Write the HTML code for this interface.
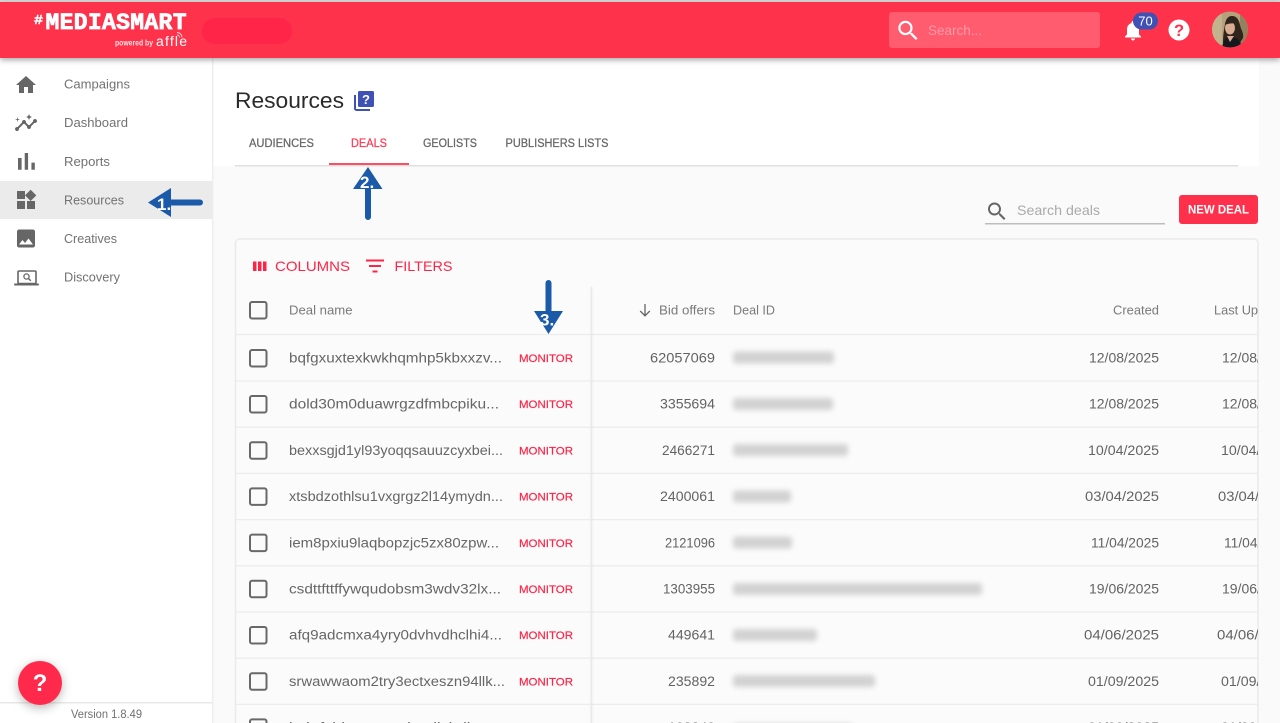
<!DOCTYPE html>
<html><head><meta charset="utf-8"><title>Resources</title>
<style>
html,body{margin:0;padding:0;width:1280px;height:723px;overflow:hidden;background:#fafafa}
svg{display:block}
text{font-family:"Liberation Sans",sans-serif}
.n{font-size:13px;fill:#727272}
.t{font-size:11.5px;fill:#666;stroke:#666;stroke-width:.25}
.h{font-size:12.5px;fill:#7a7a7a}
.r{font-size:13.5px;fill:#666}
.m{font-size:11px;fill:#ff2447;stroke:#ff2447;stroke-width:.2}
.v{font-size:13.5px;fill:#636363;text-anchor:end}
.a{font-size:17px;fill:#fff;font-weight:bold}
.cb{fill:none;stroke:#696969;stroke-width:2}
.l{stroke:#ececec;stroke-width:1.3}
.b{fill:#d2d2d2;filter:url(#bl)}
</style></head><body>
<svg width="1280" height="723" viewBox="0 0 1280 723" xmlns="http://www.w3.org/2000/svg">
<defs>
<filter id="bl" x="-10%" y="-100%" width="120%" height="300%"><feGaussianBlur stdDeviation="2.6"/></filter>
<filter id="sh" x="-10%" y="-50%" width="120%" height="250%"><feDropShadow dx="0" dy="2" stdDeviation="3" flood-color="#000" flood-opacity=".35"/></filter>
<filter id="fs" x="-50%" y="-50%" width="200%" height="200%"><feDropShadow dx="0" dy="3" stdDeviation="5" flood-color="#000" flood-opacity=".28"/></filter>
<filter id="cs" x="-50%" y="-5%" width="200%" height="110%"><feGaussianBlur stdDeviation="1.5"/></filter>
<clipPath id="card"><rect x="235" y="239" width="1023" height="490"/></clipPath>
<clipPath id="av"><circle cx="1230" cy="29.500" r="18"/></clipPath>
</defs>

<rect width="1280" height="723" fill="#fafafa"/>
<rect x="0" y="58" width="1259" height="108" fill="#fff"/>
<rect x="0" y="58" width="212" height="665" fill="#fff"/>
<rect x="212" y="58" width="1.500" height="665" fill="#eeeeee"/>

<!-- Sidebar -->
<rect x="0" y="181" width="212" height="38" fill="#ebebeb"/>
<g fill="#666">
<path transform="translate(14 73)" d="M10 20v-6h4v6h5v-8h3L12 3 2 12h3v8z"/>
<path transform="translate(14 111)" d="M21 8c-1.450 0-2.260 1.440-1.930 2.510l-3.550 3.560c-.3-.09-.74-.09-1.040 0l-2.550-2.550C12.270 10.450 11.460 9 10 9c-1.450 0-2.270 1.440-1.930 2.520l-4.560 4.550C2.440 15.740 1 16.550 1 18c0 1.100.9 2 2 2 1.450 0 2.260-1.440 1.930-2.510l4.550-4.560c.3.09.74.09 1.040 0l2.550 2.550C12.730 16.550 13.540 18 15 18c1.450 0 2.270-1.440 1.930-2.520l3.560-3.550c1.070.33 2.510-.48 2.510-1.930 0-1.100-.9-2-2-2zM15 9l.94-2.070L18 6l-2.060-.93L15 3l-.92 2.070L12 6l2.080.93zM3.500 11L4 9l2-.5L4 8l-.5-2L3 8l-2 .5L3 9z"/>
<path transform="translate(12 147) scale(1.200)" d="M5 9.200h3V19H5zM10.600 5h2.800v14h-2.800zm5.600 8H19v6h-2.800z"/>
<path transform="translate(14 188)" d="M13 13v8h8v-8h-8zM3 21h8v-8H3v8zM3 3v8h8V3H3zm13.660-1.310L11 7.340 16.660 13l5.660-5.660-5.660-5.650z"/>
<path transform="translate(14 226.500)" d="M21 19V5c0-1.100-.9-2-2-2H5c-1.100 0-2 .9-2 2v14c0 1.100.9 2 2 2h14c1.100 0 2-.9 2-2zM8.500 13.500l2.500 3.010L14.500 12l4.500 6H5l3.500-4.500z"/>
<rect x="14" y="283.500" width="25" height="2" rx="1"/>
</g>
<rect x="18" y="271" width="18" height="12.500" rx="1" fill="none" stroke="#666" stroke-width="1.600"/>
<circle cx="26.500" cy="276.500" r="2.600" fill="none" stroke="#666" stroke-width="1.300"/>
<path d="M28.500 278.500l2.300 2.300" stroke="#666" stroke-width="1.400"/>

<text class="n" x="64" y="88.500" textLength="66" lengthAdjust="spacingAndGlyphs">Campaigns</text>
<text class="n" x="64" y="127" textLength="64" lengthAdjust="spacingAndGlyphs">Dashboard</text>
<text class="n" x="64" y="166" textLength="46" lengthAdjust="spacingAndGlyphs">Reports</text>
<text class="n" x="64" y="204.500" textLength="60" lengthAdjust="spacingAndGlyphs">Resources</text>
<text class="n" x="64" y="243" textLength="53" lengthAdjust="spacingAndGlyphs">Creatives</text>
<text class="n" x="64" y="281.500" textLength="56" lengthAdjust="spacingAndGlyphs">Discovery</text>

<rect x="0" y="702" width="212" height="1.500" fill="#e8e8e8"/>
<text x="71" y="718" font-size="11.500" fill="#707070" textLength="71" lengthAdjust="spacingAndGlyphs">Version 1.8.49</text>
<circle cx="40" cy="683" r="22" fill="#ff2c4b" filter="url(#fs)"/>
<text x="40" y="691" font-size="24" font-weight="bold" fill="#fff" text-anchor="middle">?</text>

<!-- Header -->
<rect x="0" y="0" width="1280" height="2" fill="#d8d8d8"/>
<rect x="0" y="2" width="1280" height="56" fill="#ff304b" filter="url(#sh)"/>
<text x="34" y="24" font-size="14" font-weight="bold" fill="#fff" stroke="#fff" stroke-width=".4" textLength="9" lengthAdjust="spacingAndGlyphs" style="font-family:'Liberation Mono',monospace">#</text>
<text x="45.500" y="29" font-size="23" font-weight="bold" fill="#fff" stroke="#fff" stroke-width=".8" textLength="141" lengthAdjust="spacing" style="font-family:'Liberation Mono',monospace">MEDIASMART</text>
<text x="115" y="45.500" font-size="8.500" font-weight="bold" fill="#ffdfe3" textLength="38" lengthAdjust="spacingAndGlyphs">powered by</text>
<text x="156" y="46" font-size="14" fill="#fff" textLength="31" lengthAdjust="spacing">affle</text>
<path d="M177 32.500a5 5 0 0 1 5 5M177 35a2.500 2.500 0 0 1 2.500 2.500" fill="none" stroke="#ffd5da" stroke-width=".9"/>
<rect x="202" y="18" width="90" height="26" rx="13" fill="#ff2548"/>

<rect x="889" y="12" width="211" height="36" rx="3" fill="#ff5c6f"/>
<path fill="#fff" transform="translate(895 17.500) scale(1.100)" d="M15.500 14h-.79l-.28-.27C15.410 12.590 16 11.110 16 9.500 16 5.910 13.090 3 9.500 3S3 5.910 3 9.500 5.910 16 9.500 16c1.610 0 3.090-.59 4.230-1.570l.27.28v.79l5 4.990L20.490 19l-4.990-5zm-6 0C7.010 14 5 11.990 5 9.500S7.010 5 9.500 5 14 7.010 14 9.500 11.990 14 9.500 14z"/>
<text x="928" y="35" font-size="14" fill="#ff9aa7" textLength="54" lengthAdjust="spacingAndGlyphs">Search...</text>

<path fill="#fff" transform="translate(1121 18.500)" d="M12 22c1.100 0 2-.9 2-2h-4c0 1.100.89 2 2 2zm6-6v-5c0-3.070-1.640-5.640-4.500-6.320V4c0-.83-.67-1.500-1.500-1.500s-1.500.67-1.500 1.500v.68C7.630 5.360 6 7.920 6 11v5l-2 2v1h16v-1l-2-2z"/>
<rect x="1133" y="12.500" width="25" height="17" rx="8.500" fill="#3f51b5"/>
<text x="1145.500" y="25.500" font-size="13" fill="#fff" text-anchor="middle">70</text>
<circle cx="1179" cy="30" r="10.500" fill="#fff"/>
<text x="1179" y="36" font-size="16.500" font-weight="bold" fill="#ff304b" text-anchor="middle">?</text>

<g clip-path="url(#av)">
<rect x="1212" y="11" width="36" height="37" fill="#b5a27c"/>
<rect x="1212" y="11" width="10" height="37" fill="#c2b28d"/>
<rect x="1240" y="11" width="8" height="37" fill="#94815e"/>
<path d="M1223 43c0-8 1-13 2-19 1-5 3-8 7-8 5 0 7 4 8 9 1 5 4 8 3 13l-5 8z" fill="#30241c"/>
<ellipse cx="1230" cy="28" rx="5" ry="6.500" fill="#d8ad92"/>
<path d="M1225 25c0-4 3-6 6-6 3 0 4 2 5 5-3-1-7-1-11 1z" fill="#30241c"/>
<path d="M1222 48c1-7 4-11 8-11 6 0 11 3 12 11z" fill="#15181d"/>
<path d="M1227 36l3 6 4-6z" fill="#d8ad92"/>
</g>

<!-- Title -->
<text x="235" y="108" font-size="22" fill="#2a2a2a" textLength="109" lengthAdjust="spacingAndGlyphs">Resources</text>
<path d="M355 95v13.500a1.500 1.500 0 0 0 1.500 1.500H370" fill="none" stroke="#3f51b5" stroke-width="2"/>
<rect x="358" y="91" width="16" height="16" rx="1.500" fill="#3f51b5"/>
<text x="366" y="104" font-size="13" font-weight="bold" fill="#fff" text-anchor="middle">?</text>

<!-- Tabs -->
<rect x="235" y="165" width="1003" height="1.500" fill="#e0e0e0"/>
<text class="t" x="249" y="147" textLength="65" lengthAdjust="spacingAndGlyphs">AUDIENCES</text>
<text class="t" x="351" y="147" textLength="36" lengthAdjust="spacingAndGlyphs" style="fill:#ff3a55;stroke:#ff3a55">DEALS</text>
<text class="t" x="423" y="147" textLength="54" lengthAdjust="spacingAndGlyphs">GEOLISTS</text>
<text class="t" x="505.500" y="147" textLength="103" lengthAdjust="spacingAndGlyphs">PUBLISHERS LISTS</text>
<rect x="329" y="163" width="80" height="2" fill="#ff4d63"/>

<!-- Search deals + button -->
<path fill="#666" transform="translate(985 199.500)" d="M15.500 14h-.79l-.28-.27C15.410 12.590 16 11.110 16 9.500 16 5.910 13.090 3 9.500 3S3 5.910 3 9.500 5.910 16 9.500 16c1.610 0 3.090-.59 4.230-1.570l.27.28v.79l5 4.990L20.490 19l-4.990-5zm-6 0C7.010 14 5 11.990 5 9.500S7.010 5 9.500 5 14 7.010 14 9.500 11.990 14 9.500 14z"/>
<text x="1017" y="215" font-size="14" fill="#aaa" textLength="83" lengthAdjust="spacingAndGlyphs">Search deals</text>
<rect x="985" y="223" width="180" height="1.500" fill="#bdbdbd"/>
<rect x="1179" y="195" width="79" height="29" rx="3" fill="#ff304b"/>
<text x="1188" y="213.500" font-size="11.500" font-weight="bold" fill="#fff" textLength="61" lengthAdjust="spacingAndGlyphs">NEW DEAL</text>

<!-- Card -->
<rect x="235.500" y="239" width="1022.500" height="500" rx="4" fill="#fbfbfb" stroke="#eaeaea" stroke-width="1.500"/>

<g fill="#ff2447">
<rect x="253" y="261.500" width="3.500" height="9.500"/><rect x="258" y="261.500" width="3.500" height="9.500"/><rect x="263" y="261.500" width="3.500" height="9.500"/>
<rect x="366" y="259.500" width="18" height="2"/><rect x="369" y="265" width="12" height="2"/><rect x="372.500" y="270.500" width="5" height="2"/>
</g>
<text x="275" y="271" font-size="14" fill="#ff2447" textLength="75" lengthAdjust="spacingAndGlyphs">COLUMNS</text>
<text x="394.500" y="271" font-size="14" fill="#ff2447" textLength="58" lengthAdjust="spacingAndGlyphs">FILTERS</text>

<g clip-path="url(#card)">
<g class="l">
<line x1="236" x2="1258" y1="334.500" y2="334.500"/>
<line x1="236" x2="1258" y1="381" y2="381"/>
<line x1="236" x2="1258" y1="427.200" y2="427.200"/>
<line x1="236" x2="1258" y1="473.400" y2="473.400"/>
<line x1="236" x2="1258" y1="519.600" y2="519.600"/>
<line x1="236" x2="1258" y1="565.800" y2="565.800"/>
<line x1="236" x2="1258" y1="612" y2="612"/>
<line x1="236" x2="1258" y1="658.200" y2="658.200"/>
<line x1="236" x2="1258" y1="704.400" y2="704.400"/>
</g>
<rect x="590.500" y="287" width="2" height="440" fill="#000" opacity=".07" filter="url(#cs)"/>
<rect x="591" y="287" width="1" height="440" fill="#e9e9e9"/>

<rect class="cb" x="250" y="302" width="16.500" height="16.500" rx="2"/>
<rect class="cb" x="250" y="350" width="16.500" height="16.500" rx="2"/>
<rect class="cb" x="250" y="396" width="16.500" height="16.500" rx="2"/>
<rect class="cb" x="250" y="442.200" width="16.500" height="16.500" rx="2"/>
<rect class="cb" x="250" y="488.400" width="16.500" height="16.500" rx="2"/>
<rect class="cb" x="250" y="534.600" width="16.500" height="16.500" rx="2"/>
<rect class="cb" x="250" y="580.800" width="16.500" height="16.500" rx="2"/>
<rect class="cb" x="250" y="627" width="16.500" height="16.500" rx="2"/>
<rect class="cb" x="250" y="673.200" width="16.500" height="16.500" rx="2"/>
<rect class="cb" x="250" y="719.400" width="16.500" height="16.500" rx="2"/>

<text class="h" x="289" y="314.500" textLength="63.500" lengthAdjust="spacingAndGlyphs">Deal name</text>
<path d="M645 304v11.500M640.200 311l4.800 4.800 4.800-4.800" fill="none" stroke="#666" stroke-width="1.300"/>
<text class="h" x="659" y="314.500" textLength="56" lengthAdjust="spacingAndGlyphs">Bid offers</text>
<text class="h" x="733" y="314.500" textLength="42" lengthAdjust="spacingAndGlyphs">Deal ID</text>
<text class="h" x="1113" y="314.500" textLength="46" lengthAdjust="spacingAndGlyphs">Created</text>
<text class="h" x="1214" y="314.500" textLength="76" lengthAdjust="spacingAndGlyphs">Last Updated</text>

<text class="r" x="289" y="362.500" textLength="213" lengthAdjust="spacingAndGlyphs">bqfgxuxtexkwkhqmhp5kbxxzv...</text>
<text class="r" x="289" y="408.700" textLength="210" lengthAdjust="spacingAndGlyphs">dold30m0duawrgzdfmbcpiku...</text>
<text class="r" x="289" y="454.900" textLength="214" lengthAdjust="spacingAndGlyphs">bexxsgjd1yl93yoqqsauuzcyxbei...</text>
<text class="r" x="289" y="501.100" textLength="214" lengthAdjust="spacingAndGlyphs">xtsbdzothlsu1vxgrgz2l14ymydn...</text>
<text class="r" x="289" y="547.300" textLength="210" lengthAdjust="spacingAndGlyphs">iem8pxiu9laqbopzjc5zx80zpw...</text>
<text class="r" x="289" y="593.500" textLength="212" lengthAdjust="spacingAndGlyphs">csdttfttffywqudobsm3wdv32lx...</text>
<text class="r" x="289" y="639.700" textLength="213" lengthAdjust="spacingAndGlyphs">afq9adcmxa4yry0dvhvdhclhi4...</text>
<text class="r" x="289" y="685.900" textLength="216" lengthAdjust="spacingAndGlyphs">srwawwaom2try3ectxeszn94llk...</text>
<text class="r" x="289" y="732.100" textLength="212" lengthAdjust="spacingAndGlyphs">bvkrfzhkmzapmthxqllxhdkyr...</text>

<text class="m" x="519" y="362" textLength="54" lengthAdjust="spacingAndGlyphs">MONITOR</text>
<text class="m" x="519" y="408.200" textLength="54" lengthAdjust="spacingAndGlyphs">MONITOR</text>
<text class="m" x="519" y="454.400" textLength="54" lengthAdjust="spacingAndGlyphs">MONITOR</text>
<text class="m" x="519" y="500.600" textLength="54" lengthAdjust="spacingAndGlyphs">MONITOR</text>
<text class="m" x="519" y="546.800" textLength="54" lengthAdjust="spacingAndGlyphs">MONITOR</text>
<text class="m" x="519" y="593" textLength="54" lengthAdjust="spacingAndGlyphs">MONITOR</text>
<text class="m" x="519" y="639.200" textLength="54" lengthAdjust="spacingAndGlyphs">MONITOR</text>
<text class="m" x="519" y="685.400" textLength="54" lengthAdjust="spacingAndGlyphs">MONITOR</text>

<text class="v" x="715" y="362.500" textLength="65" lengthAdjust="spacingAndGlyphs">62057069</text>
<text class="v" x="715" y="408.700" textLength="55" lengthAdjust="spacingAndGlyphs">3355694</text>
<text class="v" x="715" y="454.900" textLength="53" lengthAdjust="spacingAndGlyphs">2466271</text>
<text class="v" x="715" y="501.100" textLength="55" lengthAdjust="spacingAndGlyphs">2400061</text>
<text class="v" x="715" y="547.300" textLength="50" lengthAdjust="spacingAndGlyphs">2121096</text>
<text class="v" x="715" y="593.500" textLength="52" lengthAdjust="spacingAndGlyphs">1303955</text>
<text class="v" x="715" y="639.700" textLength="47" lengthAdjust="spacingAndGlyphs">449641</text>
<text class="v" x="715" y="685.900" textLength="47" lengthAdjust="spacingAndGlyphs">235892</text>
<text class="v" x="715" y="732.100" textLength="47" lengthAdjust="spacingAndGlyphs">198240</text>

<rect class="b" x="733" y="351.500" width="101" height="12" rx="3"/>
<rect class="b" x="733" y="398" width="100" height="12" rx="3"/>
<rect class="b" x="733" y="444" width="115" height="12" rx="3"/>
<rect class="b" x="733" y="490.500" width="58" height="12" rx="3"/>
<rect class="b" x="733" y="536.500" width="59" height="12" rx="3"/>
<rect class="b" x="733" y="583" width="249" height="12" rx="3"/>
<rect class="b" x="733" y="629" width="84" height="12" rx="3"/>
<rect class="b" x="733" y="675" width="142" height="12" rx="3"/>
<rect class="b" x="733" y="724" width="120" height="12" rx="3"/>

<text class="v" x="1159" y="362.500" textLength="70" lengthAdjust="spacingAndGlyphs">12/08/2025</text>
<text class="v" x="1159" y="408.700" textLength="70" lengthAdjust="spacingAndGlyphs">12/08/2025</text>
<text class="v" x="1159" y="454.900" textLength="71" lengthAdjust="spacingAndGlyphs">10/04/2025</text>
<text class="v" x="1159" y="501.100" textLength="74" lengthAdjust="spacingAndGlyphs">03/04/2025</text>
<text class="v" x="1159" y="547.300" textLength="68" lengthAdjust="spacingAndGlyphs">11/04/2025</text>
<text class="v" x="1159" y="593.500" textLength="70" lengthAdjust="spacingAndGlyphs">19/06/2025</text>
<text class="v" x="1159" y="639.700" textLength="75" lengthAdjust="spacingAndGlyphs">04/06/2025</text>
<text class="v" x="1159" y="685.900" textLength="71" lengthAdjust="spacingAndGlyphs">01/09/2025</text>
<text class="v" x="1159" y="732.100" textLength="71" lengthAdjust="spacingAndGlyphs">01/09/2025</text>

<text class="v" x="1292" y="362.500" textLength="70" lengthAdjust="spacingAndGlyphs">12/08/2025</text>
<text class="v" x="1292" y="408.700" textLength="70" lengthAdjust="spacingAndGlyphs">12/08/2025</text>
<text class="v" x="1292" y="454.900" textLength="71" lengthAdjust="spacingAndGlyphs">10/04/2025</text>
<text class="v" x="1292" y="501.100" textLength="74" lengthAdjust="spacingAndGlyphs">03/04/2025</text>
<text class="v" x="1292" y="547.300" textLength="68" lengthAdjust="spacingAndGlyphs">11/04/2025</text>
<text class="v" x="1292" y="593.500" textLength="70" lengthAdjust="spacingAndGlyphs">19/06/2025</text>
<text class="v" x="1292" y="639.700" textLength="75" lengthAdjust="spacingAndGlyphs">04/06/2025</text>
<text class="v" x="1292" y="685.900" textLength="71" lengthAdjust="spacingAndGlyphs">01/09/2025</text>
<text class="v" x="1292" y="732.100" textLength="71" lengthAdjust="spacingAndGlyphs">01/09/2025</text>
</g>

<!-- Annotation arrows -->
<g fill="#1b5aa8">
<path d="M148 202.500L171 188v11.500h29a3 3 0 0 1 0 6h-29V217z"/>
<path d="M368 167l14.500 22h-11.500v28a3 3 0 0 1-6 0v-28H353z"/>
<path d="M548.500 334l-14.500-23h11.500v-28a3 3 0 0 1 6 0v28H563z"/>
</g>
<text class="a" x="157" y="210">1.</text>
<text class="a" x="360" y="188">2.</text>
<text class="a" x="540" y="325.500">3.</text>
</svg>
</body></html>
